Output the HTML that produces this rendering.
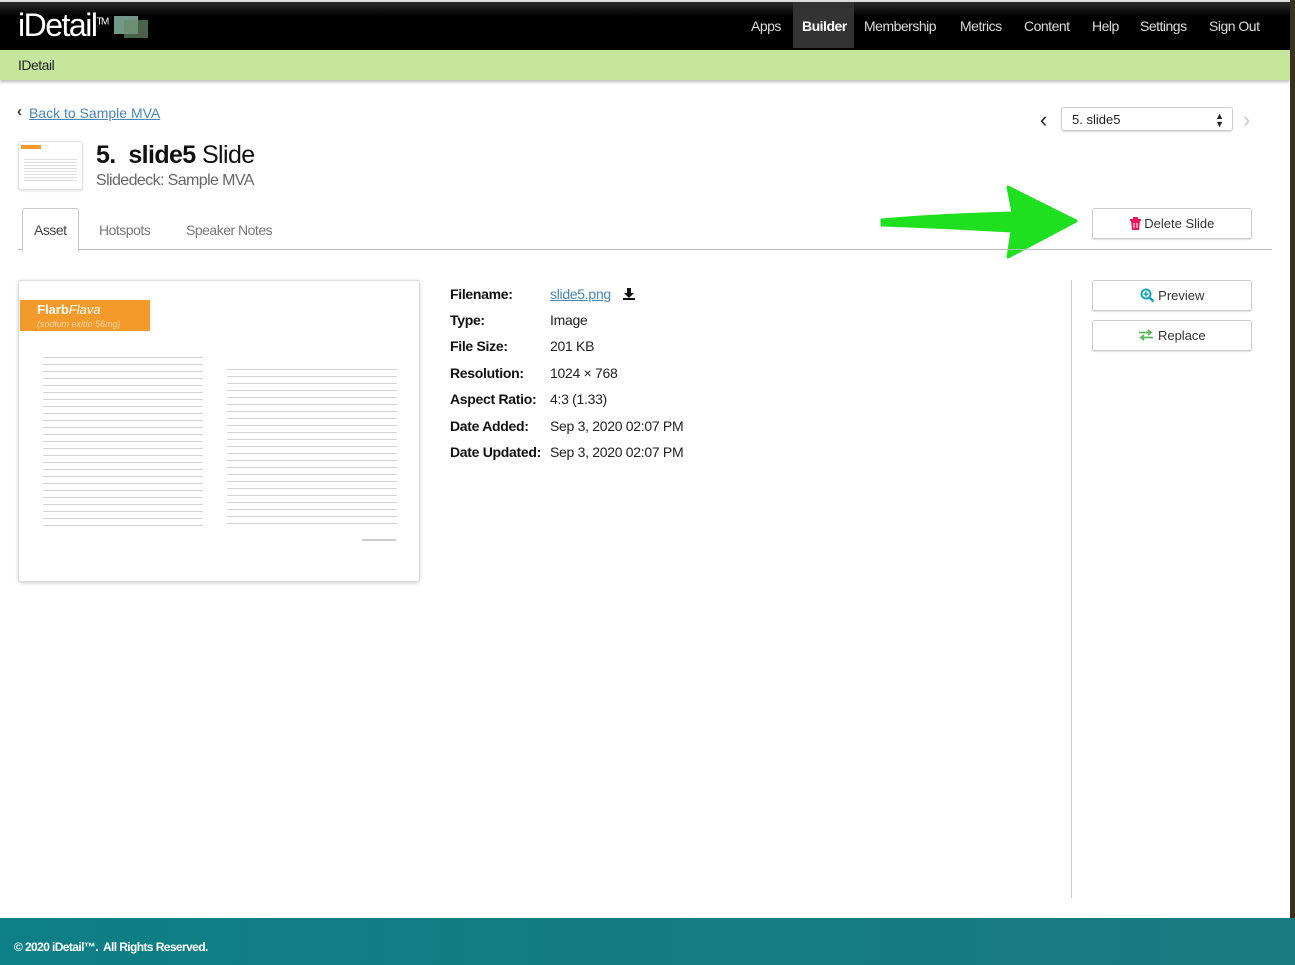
<!DOCTYPE html>
<html><head><style>
body{margin:0;width:1295px;height:965px;overflow:hidden;font-family:"Liberation Sans",sans-serif;background:#fff;position:relative}
.abs{position:absolute}
.top{left:0;top:0;width:1290px;height:50px;background:linear-gradient(#2a2a2a,#000 30%,#000);border-top:2px solid #ddd;box-sizing:border-box}
.nav a{position:absolute;top:18px;color:#ddd;font-size:14px;letter-spacing:-0.5px}
.sub{left:0;top:50px;width:1290px;height:30px;background:#c7e69d;box-shadow:0 2px 3px #bbb}
.btn{position:absolute;left:1092px;width:158px;height:29px;border:1px solid #ccc;border-radius:3px;box-shadow:0 1px 1px #ddd;font-size:13px;color:#333;text-align:center;line-height:29px;background:#fff}
.k{position:absolute;left:450px;font-size:14px;font-weight:bold;color:#111;letter-spacing:-0.3px}
.v{position:absolute;left:550px;font-size:14px;color:#222;letter-spacing:-0.3px}
.doc{position:absolute;background:repeating-linear-gradient(#fff 0 4px,#d4d4d4 4px 5px,#fff 5px 7px)}
</style></head><body>
<div class="abs top"></div>
<div class="abs" style="left:18px;top:7px;color:#fff;font-size:32px;letter-spacing:-1.5px">iDetail<sup style="font-size:10px">TM</sup></div>
<div class="abs" style="left:114px;top:16px;width:24px;height:18px;background:#8fbfaa;opacity:.8"></div>
<div class="abs" style="left:124px;top:20px;width:24px;height:18px;background:#6a8a6a;opacity:.7"></div>
<div class="abs" style="left:793px;top:2px;width:61px;height:46px;background:#333"></div>
<div class="nav">
<a style="left:751px">Apps</a><a style="left:802px;color:#fff;font-weight:bold">Builder</a><a style="left:864px">Membership</a><a style="left:960px">Metrics</a><a style="left:1024px">Content</a><a style="left:1092px">Help</a><a style="left:1140px">Settings</a><a style="left:1209px">Sign Out</a>
</div>
<div class="abs sub"></div>
<div class="abs" style="left:18px;top:57px;font-size:14px;color:#222;letter-spacing:-0.5px">IDetail</div>
<div class="abs" style="left:1290px;top:0;width:5px;height:918px;background:#3a3020"></div>

<div class="abs" style="left:17px;top:103px;font-size:15px;color:#333;font-weight:bold">‹</div>
<div class="abs" style="left:29px;top:105px;font-size:14px;color:#4a86b8;text-decoration:underline">Back to Sample MVA</div>
<div class="abs" style="left:18px;top:141px;width:63px;height:47px;border:1px solid #e3e3e3;border-radius:3px;box-shadow:0 1px 2px #ddd">
<div style="margin:3px 0 0 2px;width:20px;height:4px;background:#f39a2a"></div>
<div style="margin:8px 5px;height:24px;background:repeating-linear-gradient(#fff 0 2px,#ddd 2px 3px)"></div></div>
<div class="abs" style="left:96px;top:141px;font-size:25px;letter-spacing:-0.6px;color:#111"><b>5.&nbsp; slide5</b> Slide</div>
<div class="abs" style="left:96px;top:172px;font-size:16px;color:#666;letter-spacing:-0.6px">Slidedeck: Sample MVA</div>

<div class="abs" style="left:1040px;top:107px;font-size:22px;color:#222">‹</div>
<div class="abs" style="left:1061px;top:107px;width:172px;height:24px;border:1px solid #ccc;border-radius:3px;box-shadow:0 1px 1px #ddd;font-size:13px;line-height:24px;color:#222;box-sizing:border-box;padding-left:10px">5. slide5<span style="position:absolute;right:8px;top:0;font-size:9px;line-height:8px;padding-top:4px">▲<br>▼</span></div>
<div class="abs" style="left:1243px;top:107px;font-size:22px;color:#ccc">›</div>

<svg class="abs" style="left:878px;top:185px" width="200" height="75"><path d="M4 35 Q60 30 135 28 L130 2 L198 36 L130 72 L134 46 Q60 42 4 40 Z" fill="#1fe01f" stroke="#1fe01f" stroke-width="3" stroke-linejoin="round"/></svg>
<div class="btn" style="top:208px"><svg width="11" height="13" style="vertical-align:-2px"><rect x="0" y="2" width="11" height="2" fill="#e8195a"/><rect x="3" y="0" width="5" height="2" fill="#e8195a"/><path d="M1 4h9l-1 9H2z" fill="#e8195a"/><path d="M4 6v5M7 6v5" stroke="#fff" stroke-width="1"/></svg> Delete Slide</div>

<div class="abs" style="left:18px;top:249px;width:1254px;height:1px;background:#bbb"></div>
<div class="abs" style="left:22px;top:208px;width:55px;height:42px;border:1px solid #ccc;border-bottom:1px solid #fff;border-radius:3px 3px 0 0;background:#fff"></div>
<div class="abs" style="left:34px;top:222px;font-size:14px;color:#444;letter-spacing:-0.5px">Asset</div>
<div class="abs" style="left:99px;top:222px;font-size:14px;color:#777;letter-spacing:-0.5px">Hotspots</div>
<div class="abs" style="left:186px;top:222px;font-size:14px;color:#777;letter-spacing:-0.5px">Speaker Notes</div>

<div class="abs" style="left:18px;top:280px;width:400px;height:300px;border:1px solid #ddd;border-radius:3px;box-shadow:0 1px 3px #ccc;background:#fff;overflow:hidden">
<div style="position:absolute;left:1px;top:19px;width:130px;height:31px;background:#f39a2a;color:#fff;font-size:13px;padding:3px 0 0 17px;box-sizing:border-box;line-height:13px"><b>Flarb</b><i>Flava</i><br><i style="font-size:9px;color:#fbd7a8">(sodium exitio 56mg)</i></div>
<div class="doc" style="left:24px;top:72px;width:160px;height:175px"></div>
<div class="doc" style="left:208px;top:84px;width:170px;height:165px"></div>
<div style="position:absolute;left:343px;top:258px;width:34px;height:2px;background:#ccc"></div>
</div>

<div class="k" style="top:286px">Filename:</div><div class="v" style="top:286px;color:#4a86b8;text-decoration:underline">slide5.png</div>
<svg class="abs" style="left:623px;top:288px" width="12" height="12"><path d="M4 0h4v5h3l-5 5-5-5h3z" fill="#111"/><rect x="0" y="10" width="12" height="2" fill="#111"/></svg>
<div class="k" style="top:312px">Type:</div><div class="v" style="top:312px">Image</div>
<div class="k" style="top:338px">File Size:</div><div class="v" style="top:338px">201 KB</div>
<div class="k" style="top:365px">Resolution:</div><div class="v" style="top:365px">1024 × 768</div>
<div class="k" style="top:391px">Aspect Ratio:</div><div class="v" style="top:391px">4:3 (1.33)</div>
<div class="k" style="top:418px">Date Added:</div><div class="v" style="top:418px">Sep 3, 2020 02:07 PM</div>
<div class="k" style="top:444px">Date Updated:</div><div class="v" style="top:444px">Sep 3, 2020 02:07 PM</div>

<div class="abs" style="left:1071px;top:280px;width:1px;height:618px;background:#ccc"></div>
<div class="btn" style="top:280px"><svg width="15" height="15" style="vertical-align:-3px"><circle cx="6" cy="6" r="4.5" fill="none" stroke="#17a2b8" stroke-width="2"/><path d="M6 3.5v5M3.5 6h5" stroke="#17a2b8" stroke-width="1.5"/><path d="M9.5 9.5l4 4" stroke="#17a2b8" stroke-width="2.5"/></svg> Preview</div>
<div class="btn" style="top:320px"><svg width="16" height="12" style="vertical-align:-1px"><path d="M1 3.5h12M10 1l3 2.5-3 2.5M15 8.5H3M6 6l-3 2.5 3 2.5" fill="none" stroke="#5cb85c" stroke-width="1.8"/></svg> Replace</div>

<div class="abs" style="left:0;top:918px;width:1295px;height:47px;background:linear-gradient(90deg,#0d7f86,#137c82 50%,#1a7a80)"></div>
<div class="abs" style="left:14px;top:940px;font-size:12px;font-weight:bold;color:#fff;letter-spacing:-0.6px">© 2020 iDetail™.&nbsp; All Rights Reserved.</div>
</body></html>
